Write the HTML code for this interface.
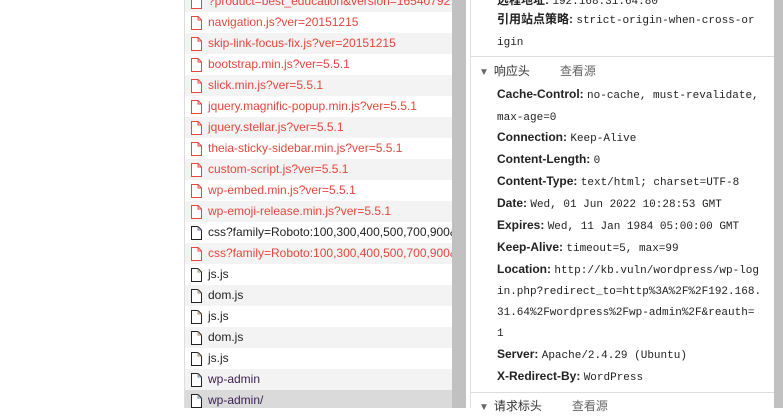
<!DOCTYPE html><html><head><meta charset="utf-8"><style>
body{margin:0;width:783px;height:408px;overflow:hidden;background:#fff;position:relative;font-family:"Liberation Sans","Noto Sans CJK SC",sans-serif;}
#list{position:absolute;left:184px;top:0;width:268px;height:408px;border-left:1px solid #ddd;overflow:hidden}
.r{position:absolute;left:0;width:268px;height:21px;font-size:12px;line-height:21px;white-space:nowrap;overflow:hidden;color:#222}
.r.g{background:#f3f3f3}.r.s{background:#dadada}
.r.red{color:#e8453c}
.r svg{position:absolute;left:6px;top:4px}
.r span{position:absolute;left:23px}
#sb1{position:absolute;left:452px;top:0;width:14px;height:408px;background:#c1c1c1}
#rp{position:absolute;left:470px;top:0;width:303px;height:408px;border-left:1px solid #ddd;background:#fff}
#sb2{position:absolute;left:774px;top:0;width:9px;height:408px;background:#c1c1c1}
.l{position:absolute;left:26px;font-size:12px;line-height:21px;white-space:nowrap;color:#222}
.l b{font-weight:bold}
.m{font-family:"Liberation Mono",monospace;font-size:11px}
.hr{position:absolute;left:0;width:303px;height:1px;background:#ddd}
.h{position:absolute;left:8px;font-size:12px;line-height:21px;color:#333}
.h i{font-style:normal;font-size:10px;color:#666;margin-right:5px}
.h em{font-style:normal;color:#666;margin-left:30px}
</style></head><body>
<div id="list">
<div class="r g red" style="top:-9px"><svg width="11" height="14" viewBox="0 0 11 14"><path d="M.5.5h6.5l3.5 3.5v9.5h-10z" fill="#fff" stroke="#e8453c"/><path d="M7 .5v3.5h3.5" fill="none" stroke="#e8453c"/></svg><span>?product=best_education&amp;version=16540792</span></div>
<div class="r red" style="top:12px"><svg width="11" height="14" viewBox="0 0 11 14"><path d="M.5.5h6.5l3.5 3.5v9.5h-10z" fill="#fff" stroke="#e8453c"/><path d="M7 .5v3.5h3.5" fill="none" stroke="#e8453c"/></svg><span>navigation.js?ver=20151215</span></div>
<div class="r g red" style="top:33px"><svg width="11" height="14" viewBox="0 0 11 14"><path d="M.5.5h6.5l3.5 3.5v9.5h-10z" fill="#fff" stroke="#e8453c"/><path d="M7 .5v3.5h3.5" fill="none" stroke="#e8453c"/></svg><span>skip-link-focus-fix.js?ver=20151215</span></div>
<div class="r red" style="top:54px"><svg width="11" height="14" viewBox="0 0 11 14"><path d="M.5.5h6.5l3.5 3.5v9.5h-10z" fill="#fff" stroke="#e8453c"/><path d="M7 .5v3.5h3.5" fill="none" stroke="#e8453c"/></svg><span>bootstrap.min.js?ver=5.5.1</span></div>
<div class="r g red" style="top:75px"><svg width="11" height="14" viewBox="0 0 11 14"><path d="M.5.5h6.5l3.5 3.5v9.5h-10z" fill="#fff" stroke="#e8453c"/><path d="M7 .5v3.5h3.5" fill="none" stroke="#e8453c"/></svg><span>slick.min.js?ver=5.5.1</span></div>
<div class="r red" style="top:96px"><svg width="11" height="14" viewBox="0 0 11 14"><path d="M.5.5h6.5l3.5 3.5v9.5h-10z" fill="#fff" stroke="#e8453c"/><path d="M7 .5v3.5h3.5" fill="none" stroke="#e8453c"/></svg><span>jquery.magnific-popup.min.js?ver=5.5.1</span></div>
<div class="r g red" style="top:117px"><svg width="11" height="14" viewBox="0 0 11 14"><path d="M.5.5h6.5l3.5 3.5v9.5h-10z" fill="#fff" stroke="#e8453c"/><path d="M7 .5v3.5h3.5" fill="none" stroke="#e8453c"/></svg><span>jquery.stellar.js?ver=5.5.1</span></div>
<div class="r red" style="top:138px"><svg width="11" height="14" viewBox="0 0 11 14"><path d="M.5.5h6.5l3.5 3.5v9.5h-10z" fill="#fff" stroke="#e8453c"/><path d="M7 .5v3.5h3.5" fill="none" stroke="#e8453c"/></svg><span>theia-sticky-sidebar.min.js?ver=5.5.1</span></div>
<div class="r g red" style="top:159px"><svg width="11" height="14" viewBox="0 0 11 14"><path d="M.5.5h6.5l3.5 3.5v9.5h-10z" fill="#fff" stroke="#e8453c"/><path d="M7 .5v3.5h3.5" fill="none" stroke="#e8453c"/></svg><span>custom-script.js?ver=5.5.1</span></div>
<div class="r red" style="top:180px"><svg width="11" height="14" viewBox="0 0 11 14"><path d="M.5.5h6.5l3.5 3.5v9.5h-10z" fill="#fff" stroke="#e8453c"/><path d="M7 .5v3.5h3.5" fill="none" stroke="#e8453c"/></svg><span>wp-embed.min.js?ver=5.5.1</span></div>
<div class="r g red" style="top:201px"><svg width="11" height="14" viewBox="0 0 11 14"><path d="M.5.5h6.5l3.5 3.5v9.5h-10z" fill="#fff" stroke="#e8453c"/><path d="M7 .5v3.5h3.5" fill="none" stroke="#e8453c"/></svg><span>wp-emoji-release.min.js?ver=5.5.1</span></div>
<div class="r" style="top:222px"><svg width="11" height="14" viewBox="0 0 11 14"><path d="M.5.5h6.5l3.5 3.5v9.5h-10z" fill="#fff" stroke="#222"/><path d="M7 .5v3.5h3.5" fill="none" stroke="#86a"/></svg><span>css?family=Roboto:100,300,400,500,700,900&amp;s</span></div>
<div class="r g red" style="top:243px"><svg width="11" height="14" viewBox="0 0 11 14"><path d="M.5.5h6.5l3.5 3.5v9.5h-10z" fill="#fff" stroke="#e8453c"/><path d="M7 .5v3.5h3.5" fill="none" stroke="#e8453c"/></svg><span>css?family=Roboto:100,300,400,500,700,900&amp;s</span></div>
<div class="r" style="top:264px"><svg width="11" height="14" viewBox="0 0 11 14"><path d="M.5.5h6.5l3.5 3.5v9.5h-10z" fill="#fff" stroke="#222"/><path d="M7 .5v3.5h3.5" fill="none" stroke="#a86"/></svg><span>js.js</span></div>
<div class="r g" style="top:285px"><svg width="11" height="14" viewBox="0 0 11 14"><path d="M.5.5h6.5l3.5 3.5v9.5h-10z" fill="#fff" stroke="#222"/><path d="M7 .5v3.5h3.5" fill="none" stroke="#a86"/></svg><span>dom.js</span></div>
<div class="r" style="top:306px"><svg width="11" height="14" viewBox="0 0 11 14"><path d="M.5.5h6.5l3.5 3.5v9.5h-10z" fill="#fff" stroke="#222"/><path d="M7 .5v3.5h3.5" fill="none" stroke="#a86"/></svg><span>js.js</span></div>
<div class="r g" style="top:327px"><svg width="11" height="14" viewBox="0 0 11 14"><path d="M.5.5h6.5l3.5 3.5v9.5h-10z" fill="#fff" stroke="#222"/><path d="M7 .5v3.5h3.5" fill="none" stroke="#a86"/></svg><span>dom.js</span></div>
<div class="r" style="top:348px"><svg width="11" height="14" viewBox="0 0 11 14"><path d="M.5.5h6.5l3.5 3.5v9.5h-10z" fill="#fff" stroke="#222"/><path d="M7 .5v3.5h3.5" fill="none" stroke="#a86"/></svg><span>js.js</span></div>
<div class="r g" style="top:369px;color:#3b1f55"><svg width="11" height="14" viewBox="0 0 11 14"><path d="M.5.5h6.5l3.5 3.5v9.5h-10z" fill="#fff" stroke="#222"/><path d="M7 .5v3.5h3.5" fill="none" stroke="#68a"/></svg><span>wp-admin</span></div>
<div class="r s" style="top:390px;color:#3b1f55"><svg width="11" height="14" viewBox="0 0 11 14"><path d="M.5.5h6.5l3.5 3.5v9.5h-10z" fill="#fff" stroke="#222"/><path d="M7 .5v3.5h3.5" fill="none" stroke="#68a"/></svg><span>wp-admin/</span></div>
</div>
<div id="sb1"></div>
<div id="rp">
<div class="l" style="top:-10px"><b>远程地址:</b> <span class="m">192.168.31.64:80</span></div>
<div class="l" style="top:9px"><b>引用站点策略:</b> <span class="m">strict-origin-when-cross-or</span></div>
<div class="l" style="top:31px"><span class="m">igin</span></div>
<div class="hr" style="top:56px"></div>
<div class="h" style="top:61px"><i>▼</i>响应头<em>查看源</em></div>
<div class="l" style="top:84px"><b>Cache-Control:</b> <span class="m">no-cache, must-revalidate,</span></div>
<div class="l" style="top:106px"><span class="m">max-age=0</span></div>
<div class="l" style="top:127px"><b>Connection:</b> <span class="m">Keep-Alive</span></div>
<div class="l" style="top:149px"><b>Content-Length:</b> <span class="m">0</span></div>
<div class="l" style="top:171px"><b>Content-Type:</b> <span class="m">text/html; charset=UTF-8</span></div>
<div class="l" style="top:193px"><b>Date:</b> <span class="m">Wed, 01 Jun 2022 10:28:53 GMT</span></div>
<div class="l" style="top:215px"><b>Expires:</b> <span class="m">Wed, 11 Jan 1984 05:00:00 GMT</span></div>
<div class="l" style="top:237px"><b>Keep-Alive:</b> <span class="m">timeout=5, max=99</span></div>
<div class="l" style="top:259px"><b>Location:</b> <span class="m">http://kb.vuln/wordpress/wp-log</span></div>
<div class="l" style="top:280px"><span class="m">in.php?redirect_to=http%3A%2F%2F192.168.</span></div>
<div class="l" style="top:301px"><span class="m">31.64%2Fwordpress%2Fwp-admin%2F&amp;reauth=</span></div>
<div class="l" style="top:322px"><span class="m">1</span></div>
<div class="l" style="top:344px"><b>Server:</b> <span class="m">Apache/2.4.29 (Ubuntu)</span></div>
<div class="l" style="top:366px"><b>X-Redirect-By:</b> <span class="m">WordPress</span></div>
<div class="hr" style="top:392px"></div>
<div class="h" style="top:396px"><i>▼</i>请求标头<em>查看源</em></div>
</div>
<div id="sb2"></div>
</body></html>
